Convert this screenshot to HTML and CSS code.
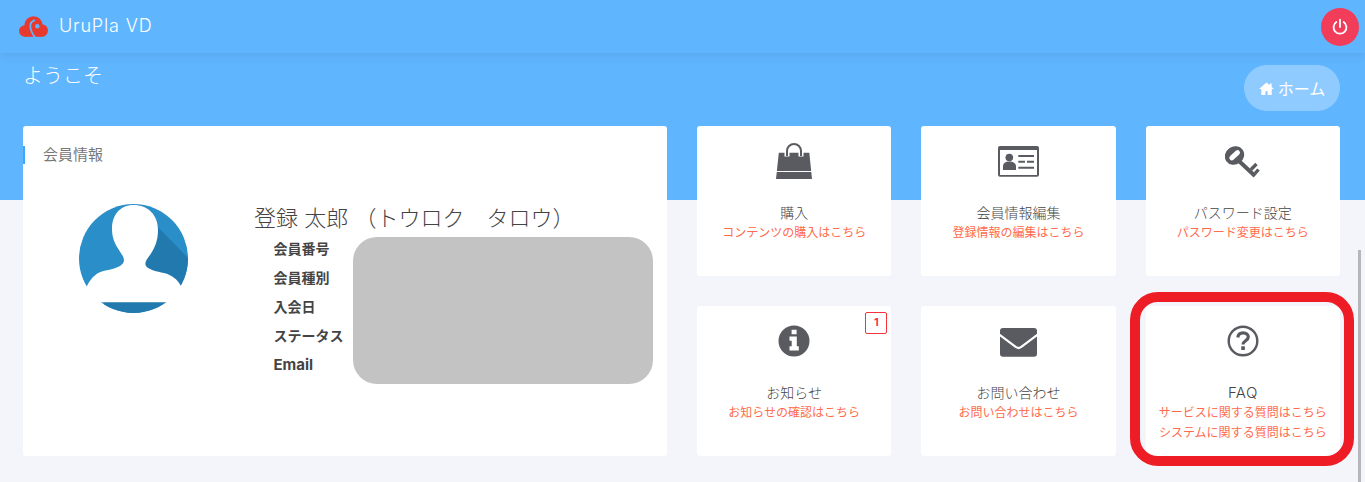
FILE: index.html
```html
<!DOCTYPE html>
<html lang="ja">
<head>
<meta charset="utf-8">
<title>UruPla VD</title>
<link rel="stylesheet" href="styles.css">
</head>
<body>
<header class="topbar">
  <div class="brand">
    <svg class="brand-logo" viewBox="0 0 29 22" aria-hidden="true">
      <circle class="logo-fill" cx="14.500" cy="9.200" r="9"/>
      <circle class="logo-fill" cx="5.800" cy="15" r="5.800"/>
      <circle class="logo-fill" cx="22.700" cy="14.500" r="6.300"/>
      <rect class="logo-fill" x="5.800" y="12" width="17" height="8.800"/>
      <path class="logo-gap" d="M16 4.200C12.500 5 11.200 8 11.400 11c.2 3.500 2.100 7 4.600 10.500"/>
      <circle class="logo-hole" cx="18.300" cy="10.300" r="2.200"/>
    </svg>
    <span class="brand-name">UruPla VD</span>
  </div>
  <button class="power" type="button" aria-label="ログアウト">
    <svg viewBox="0 0 16 16" aria-hidden="true">
      <path d="M8 1.500V8M4.700 3.600a5.700 5.700 0 1 0 6.600 0"/>
    </svg>
  </button>
</header>

<main class="page">
  <div class="page-head">
    <h1 class="welcome">ようこそ</h1>
    <a class="home-btn" href="#">
      <svg viewBox="0 0 16 14" aria-hidden="true"><path d="M8 .5 0 7.500h2.400V14h4.400V10h2.400v4h4.400V7.500H16L13.500 5.300V1.500h-2v2Z"/></svg>
      <span>ホーム</span>
    </a>
  </div>

  <div class="layout">
    <section class="member-card">
      <h2 class="card-title">会員情報</h2>
      <div class="member-body">
        <svg class="avatar" viewBox="0 0 109 109" aria-hidden="true">
          <defs><clipPath id="avatarClip"><circle cx="54.500" cy="54.500" r="54.500"/></clipPath></defs>
          <g clip-path="url(#avatarClip)">
            <rect class="av-light" width="109" height="109"/>
            <path class="av-dark" d="M68 12 110 55V110H25V92Z"/>
          </g>
          <path class="av-white" d="M54.500 1C41 1 33 11 33 25c0 9 3 15 7 21 3 5 6 8 4.500 12-2 5-10 7-18 8.500-8 1.500-14 6-19 16.500L-2 98.300H111L102 82c-4-7-9-11-17-13-7-1.500-15-3-18-7-2-3 1-7 4-11 4-6 8-13 8-25C79 11 69 1 54.500 1Z"/>
        </svg>
        <div class="member-info">
          <p class="member-name">登録 太郎 （トウロク　タロウ）</p>
          <dl class="member-list">
            <dt>会員番号</dt>
            <dt>会員種別</dt>
            <dt>入会日</dt>
            <dt>ステータス</dt>
            <dt class="latin">Email</dt>
          </dl>
        </div>
      </div>
      <div class="redaction"></div>
    </section>

    <div class="tiles">
      <a class="tile" href="#">
        <svg class="tile-icon" viewBox="0 0 36 36" aria-hidden="true">
          <path class="ic" d="M2.800 9.700H33.300L36 36H0Z"/>
          <path class="ic-white" d="M0 28.500H36" stroke-width="1"/>
          <path class="ic-white" d="M11 13.500V8a7 7 0 0 1 14 0v5.500" stroke-width="5" fill="none"/>
          <path class="ic-line" d="M11 13V8a7 7 0 0 1 14 0v5" stroke-width="2"/>
        </svg>
        <span class="tile-title">購入</span>
        <span class="tile-sub">コンテンツの購入はこちら</span>
      </a>
      <a class="tile" href="#">
        <svg class="tile-icon" viewBox="0 0 41 36" aria-hidden="true">
          <rect class="ic" x="0" y="3" width="41" height="30.700" rx="2"/>
          <rect class="ic-wfill" x="2" y="7" width="37" height="25"/>
          <circle class="ic" cx="11.300" cy="14.500" r="3.800"/>
          <path class="ic" d="M5 27v-3.500c0-3.500 2.500-5 6.300-5s6.700 1.500 6.700 5V27Z"/>
          <path class="ic-line" d="M20.300 13H36M20.300 18.700H27M29 18.700H36M20.300 24.700H36" stroke-width="2"/>
        </svg>
        <span class="tile-title">会員情報編集</span>
        <span class="tile-sub">登録情報の編集はこちら</span>
      </a>
      <a class="tile" href="#">
        <svg class="tile-icon" viewBox="0 0 36 36" aria-hidden="true">
          <path class="ic-line" d="M14 18 30 33" stroke-width="4"/>
          <path class="ic-line" d="M26 26.500 31.500 21M30 30.500 33.500 26.500" stroke-width="3.400"/>
          <ellipse class="ic" cx="9.500" cy="12.500" rx="10" ry="9" transform="rotate(-35 9.500 12.500)"/>
          <path class="ic-white" d="M12.500 9.700 6.800 14.800" stroke-width="5" stroke-linecap="round"/>
        </svg>
        <span class="tile-title">パスワード設定</span>
        <span class="tile-sub">パスワード変更はこちら</span>
      </a>
      <a class="tile" href="#">
        <svg class="tile-icon" viewBox="0 0 36 36" aria-hidden="true">
          <circle class="ic" cx="18" cy="18" r="15.500"/>
          <path class="ic-wfill" d="M15.600 6.800h5v4.400h-5ZM13.500 13.500h7.300v9.800h2v4.200h-9.300v-4.200h2.200v-5.600h-2.200Z"/>
        </svg>
        <span class="badge">1</span>
        <span class="tile-title">お知らせ</span>
        <span class="tile-sub">お知らせの確認はこちら</span>
      </a>
      <a class="tile" href="#">
        <svg class="tile-icon" viewBox="0 0 37 36" aria-hidden="true">
          <rect class="ic" x="0" y="5" width="37" height="28.700" rx="3"/>
          <path class="ic-white" d="M-1 11.500 16 24a4 4 0 0 0 5 0L38 11.500" stroke-width="2.200" fill="none"/>
        </svg>
        <span class="tile-title">お問い合わせ</span>
        <span class="tile-sub">お問い合わせはこちら</span>
      </a>
      <a class="tile" href="#">
        <svg class="tile-icon" viewBox="0 0 36 36" aria-hidden="true">
          <circle class="ic-line" cx="18" cy="18" r="14.300" stroke-width="2.400"/>
          <path class="ic-line" d="M12.800 14.500c.3-3 2.400-4.700 5.300-4.700 3 0 5.200 1.700 5.200 4.300 0 3.500-5.300 3.800-5.300 7.300" stroke-width="3.200"/>
          <rect class="ic" x="16.200" y="23.200" width="3.700" height="3.700" rx=".5"/>
        </svg>
        <span class="tile-title tile-latin">FAQ</span>
        <span class="tile-sub">サービスに関する質問はこちら</span>
        <span class="tile-sub">システムに関する質問はこちら</span>
      </a>
    </div>
  </div>
  <div class="highlight"></div>
</main>
<div class="scrollbar"></div>
</body>
</html>
```

FILE: styles.css
```css
* { box-sizing: border-box; }

html, body { height: 482px; overflow: hidden; }

body {
  margin: 0;
  position: relative;
  font-family: "Inter", "Noto Sans CJK JP", sans-serif;
  color: #555;
  background: linear-gradient(#60b5ff 200px, #f4f5fa 200px);
}

.topbar {
  height: 53px;
  padding: 8px 6px 0 19px;
  display: flex;
  justify-content: space-between;
  align-items: flex-start;
  background: #60b5ff;
  box-shadow: 0 2px 10px rgba(0, 0, 0, .09);
  position: relative;
}

.brand { display: flex; align-items: center; height: 37px; }
.brand-logo { width: 29px; height: 22px; margin-right: 11px; }
.logo-fill { fill: #e8392f; }
.logo-hole { fill: #60b5ff; }
.logo-gap { fill: none; stroke: #60b5ff; stroke-width: 1.800; }
.brand-name { color: #fff; font-size: 18px; letter-spacing: .85px; font-weight: 300; margin-bottom: 2px; }

.power {
  width: 38px;
  height: 38px;
  padding: 0;
  border: 0;
  border-radius: 50%;
  background: #f13c5a;
  display: flex;
  align-items: center;
  justify-content: center;
}
.power svg { width: 18px; height: 18px; fill: none; stroke: #fff; stroke-width: 1.600; stroke-linecap: round; }

.page { padding: 12px 25px 0 23px; position: relative; }

.page-head { display: flex; justify-content: space-between; align-items: flex-start; margin-bottom: 15px; }

.welcome {
  margin: 0;
  color: #fff;
  font-size: 20px;
  font-weight: 300;
  line-height: 23px;
}

.home-btn {
  width: 96px;
  height: 46px;
  border-radius: 23px;
  background: rgba(255, 255, 255, .3);
  color: #fff;
  font-size: 16px;
  font-weight: 400;
  text-decoration: none;
  display: flex;
  align-items: center;
  justify-content: center;
  gap: 4px;
}
.home-btn svg { width: 15px; height: 13px; fill: #fff; }

.layout { display: grid; grid-template-columns: 644px 643px; gap: 30px; }

.member-card {
  height: 330px;
  padding-top: 20px;
  background: #fff;
  border-radius: 3px;
  position: relative;
}

.card-title {
  margin: 0;
  height: 18px;
  padding-left: 18px;
  border-left: 2px solid #3ea8f7;
  color: #777;
  font-size: 15px;
  font-weight: 400;
  line-height: 18px;
}

.member-body { display: flex; padding: 40px 0 0 56px; }
.avatar { width: 109px; height: 109px; flex: none; overflow: visible; }
.av-light { fill: #2a8fc9; }
.av-dark { fill: #2279ad; }
.av-white { fill: #fff; }

.member-info { margin-left: 66px; }

.member-name {
  margin: 0 0 1px;
  color: #444;
  font-size: 22px;
  font-weight: 300;
  line-height: 29px;
  white-space: pre;
}

.member-list { margin: 0 0 0 19.500px; }
.member-list dt { color: #444; font-size: 14px; font-weight: 700; line-height: 29px; }
.member-list .latin { font-size: 15px; }

.redaction {
  position: absolute;
  left: 330px;
  top: 111px;
  width: 300px;
  height: 147px;
  border-radius: 24px;
  background: #c3c3c3;
}

.tiles { display: grid; grid-template-columns: repeat(3, 1fr); grid-auto-rows: 150px; gap: 30px; }

.tile {
  padding-top: 17px;
  background: #fff;
  border-radius: 3px;
  display: flex;
  flex-direction: column;
  align-items: center;
  text-decoration: none;
  position: relative;
}

.tile-icon { height: 36px; margin-bottom: 24px; flex: none; }
.ic { fill: #5a5b60; }
.ic-white { stroke: #fff; }
.ic-wfill { fill: #fff; }
.ic-line { stroke: #5a5b60; fill: none; }

.tile-title { color: #444; font-size: 14px; font-weight: 300; line-height: 20px; }
.tile-latin { font-size: 15px; letter-spacing: .4px; }
.tile-sub { color: #ff6b4d; font-size: 12px; font-weight: 400; line-height: 20px; }

.badge {
  position: absolute;
  top: 6px;
  right: 4px;
  width: 22px;
  height: 22px;
  border: 1px solid #f4333f;
  border-radius: 2px;
  color: #f4333f;
  font-size: 11px;
  font-weight: 700;
  line-height: 18px;
  text-align: center;
}

.highlight {
  position: absolute;
  left: 1130px;
  top: 239px;
  width: 224px;
  height: 174px;
  border: 10px solid #ee1c25;
  border-radius: 28px;
}

.scrollbar {
  position: absolute;
  left: 1358px;
  top: 250px;
  width: 3px;
  height: 232px;
  background: #b5b5bb;
}
```
